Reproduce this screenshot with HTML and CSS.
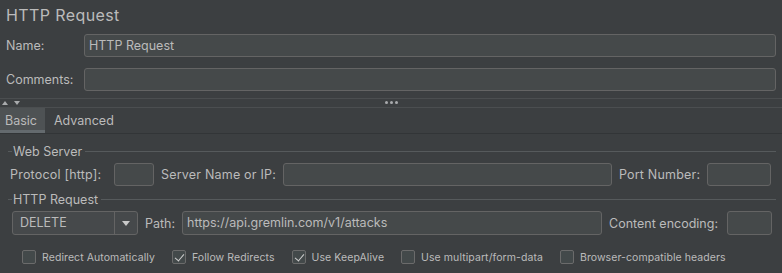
FILE: index.html
```html
<!DOCTYPE html>
<html lang="en">
  <head>
    <meta charset="UTF-8">
    <meta name="viewport" content="width=device-width, initial-scale=1.0">
    <link rel="stylesheet" href="styles.css">
    <title>HTTP Request</title>
  </head>
  <body>
    <div class="sampler">
      <h1 class="title">HTTP Request</h1>
      <div class="head">
        <div class="row">
          <label class="label">Name:</label>
          <div class="field">HTTP Request</div>
        </div>
        <div class="row">
          <label class="label">Comments:</label>
          <div class="field"></div>
        </div>
      </div>
      <div class="splitter">
        <span class="arrows"><i class="up"></i><i class="down"></i></span>
        <span class="dots"><i></i><i></i><i></i></span>
      </div>
      <div class="tabs">
        <div class="tab active">Basic</div>
        <div class="tab">Advanced</div>
      </div>
      <div class="body">
        <div class="legend"><span>Web Server</span></div>
        <div class="line server">
          <span class="text">Protocol [http]:</span>
          <div class="field protocol"></div>
          <span class="text">Server Name or IP:</span>
          <div class="field host"></div>
          <span class="text">Port Number:</span>
          <div class="field port"></div>
        </div>
        <div class="legend"><span>HTTP Request</span></div>
        <div class="line request">
          <div class="combo">
            <span class="value">DELETE</span>
            <span class="toggle"><i></i></span>
          </div>
          <span class="text">Path:</span>
          <div class="field path">https://api.gremlin.com/v1/attacks</div>
          <span class="text">Content encoding:</span>
          <div class="field encoding"></div>
        </div>
        <div class="checks">
          <label class="check"><span class="box"></span>Redirect Automatically</label>
          <label class="check"><span class="box checked"></span>Follow Redirects</label>
          <label class="check"><span class="box checked"></span>Use KeepAlive</label>
          <label class="check"><span class="box"></span>Use multipart/form-data</label>
          <label class="check"><span class="box"></span>Browser-compatible headers</label>
        </div>
      </div>
    </div>
  </body>
</html>
```
FILE: styles.css
```css
:root {
--bg: #3c3f41;
--field: #45494a;
--border: #646464;
--text: #bbbbbb;
}
* {
margin: 0;
padding: 0;
box-sizing: border-box;
}
html,
body {
width: 100%;
height: 100%;
background-color: var(--bg);
}
body {
font-family: Inter, "Noto Sans", sans-serif;
font-size: 12.5px;
color: var(--text);
overflow: hidden;
}
.title {
font-size: 16px;
font-weight: 400;
line-height: 20px;
letter-spacing: 0.4px;
padding: 5px 6px 0;
}
.head {
padding-top: 9px;
display: flex;
flex-direction: column;
gap: 11px;
}
.row {
display: flex;
align-items: center;
height: 23px;
}
.row .label {
width: 84px;
padding-left: 6px;
}
.field {
height: 23px;
line-height: 21px;
padding: 0 4px;
background-color: var(--field);
border: 1px solid var(--border);
border-radius: 3px;
white-space: nowrap;
}
.row .field {
flex: 1;
margin-right: 6px;
}
.splitter {
margin-top: 7px;
height: 10px;
border-top: 1px solid #4b4e50;
border-bottom: 1px solid #4b4e50;
display: flex;
align-items: center;
position: relative;
}
.arrows {
display: flex;
gap: 6px;
padding-left: 2px;
}
.arrows i {
width: 0;
height: 0;
border-left: 3px solid transparent;
border-right: 3px solid transparent;
}
.arrows .up {
border-bottom: 4px solid #a9abad;
}
.arrows .down {
border-top: 4px solid #a9abad;
}
.dots {
position: absolute;
left: 385px;
top: 2px;
display: flex;
gap: 2px;
}
.dots i {
width: 3px;
height: 3px;
border-radius: 50%;
background-color: #a9abad;
}
.tabs {
display: flex;
height: 26px;
border-bottom: 1px solid #323537;
}
.tab {
padding: 0 5px;
line-height: 25px;
margin-right: 4px;
}
.tab.active {
width: 45px;
background-color: #4e5254;
box-shadow: inset 0 -3px 0 #646a6e;
}
.body {
padding: 10px 6px 0 8px;
}
.legend {
display: flex;
align-items: center;
height: 14px;
}
.legend::before {
content: "";
width: 4px;
border-top: 1px solid #565a5c;
}
.legend::after {
content: "";
flex: 1;
border-top: 1px solid #565a5c;
}
.legend span {
padding: 0 3px 0 1px;
}
.line {
display: flex;
align-items: center;
margin: 5px 0 6px;
padding-left: 2px;
}
.line .text {
padding: 0 7px;
}
.server .text {
letter-spacing: 0.2px;
}
.server .text:first-child {
width: 104px;
padding-left: 0;
}
.field.protocol {
width: 40px;
}
.field.host {
width: 329px;
}
.field.port {
width: 64px;
}
.request {
margin-left: 4px;
padding-left: 0;
}
.combo {
display: flex;
width: 126px;
height: 24px;
background-color: #46494b;
border: 1px solid var(--border);
border-radius: 3px;
}
.combo .value {
flex: 1;
line-height: 22px;
padding-left: 7px;
border-right: 1px solid var(--border);
}
.combo .toggle {
width: 22px;
display: flex;
align-items: center;
justify-content: center;
}
.combo .toggle i {
width: 0;
height: 0;
border-left: 4px solid transparent;
border-right: 4px solid transparent;
border-top: 5px solid #c9c9c9;
}
.request .field {
height: 24px;
line-height: 22px;
}
.field.path {
width: 420px;
}
.field.encoding {
width: 45px;
}
.request .text:last-of-type {
padding-right: 9px;
}
.checks {
display: flex;
align-items: center;
gap: 17px;
margin-top: 15px;
padding-left: 14px;
font-size: 10.5px;
letter-spacing: 0.08px;
}
.check {
display: flex;
align-items: center;
gap: 6px;
}
.box {
width: 14px;
height: 14px;
border: 1px solid #6b6b6b;
border-radius: 2px;
background-color: #43494a;
position: relative;
}
.box.checked::after {
content: "";
position: absolute;
left: 4px;
top: 1px;
width: 4px;
height: 8px;
border-right: 1.5px solid #cfcfcf;
border-bottom: 1.5px solid #cfcfcf;
transform: rotate(40deg);
}
```
